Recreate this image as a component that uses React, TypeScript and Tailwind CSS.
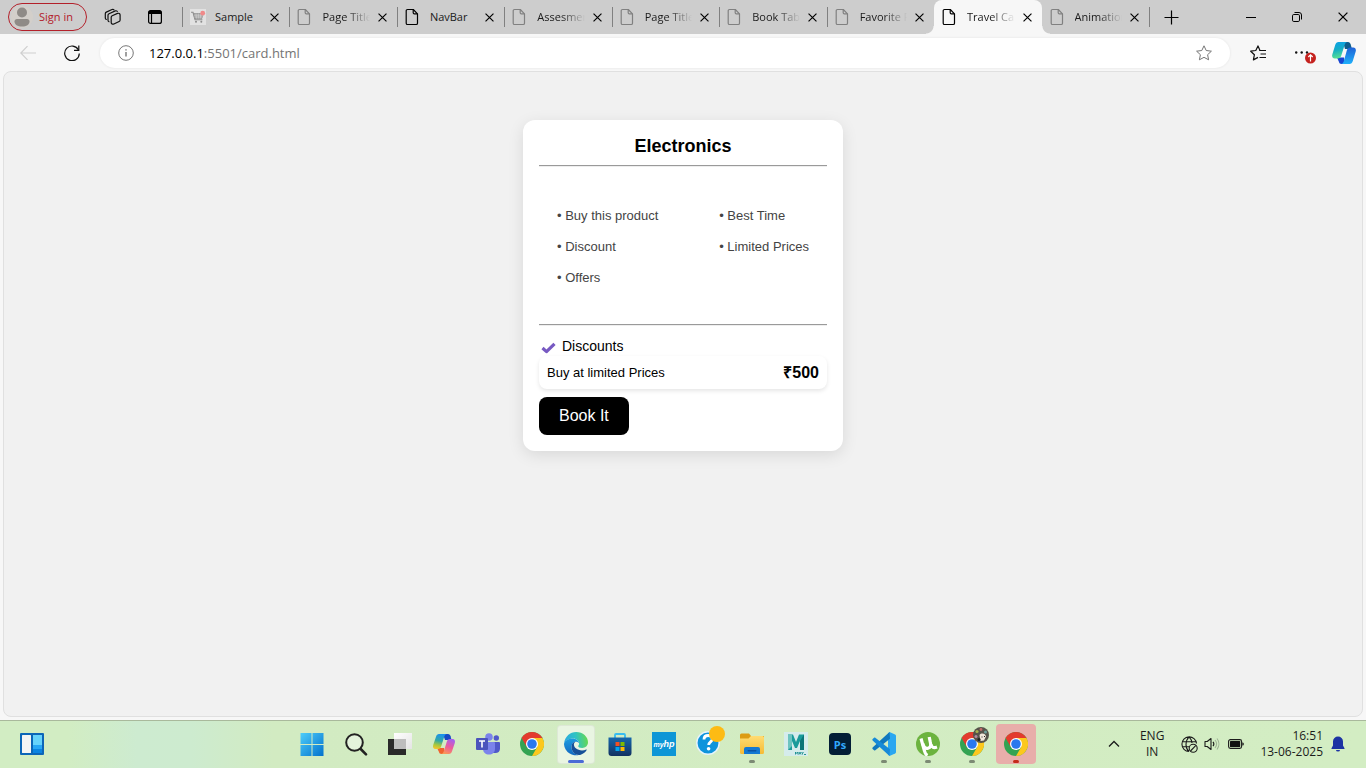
import React from "react";

type IconProps = { className?: string };

/* ---------- Browser chrome icons ---------- */

function PageIcon({ className = "" }: IconProps) {
  return (
    <svg viewBox="0 0 14 18" className={`h-[18px] w-3.5 shrink-0 ${className}`} fill="none" stroke="currentColor" strokeWidth="1.2" strokeLinejoin="round" aria-hidden="true">
      <path d="M2.5 1.5h5.8l4.2 4.3v9.4a1.3 1.3 0 0 1-1.3 1.3H2.5a1.3 1.3 0 0 1-1.3-1.3V2.8a1.3 1.3 0 0 1 1.3-1.3Z" />
      <path d="M8.2 1.6v3.2a1.1 1.1 0 0 0 1.1 1.1h3.1" />
    </svg>
  );
}

function CartIcon() {
  return (
    <svg viewBox="0 0 16 16" className="size-4 shrink-0" aria-hidden="true">
      <rect width="16" height="16" fill="#e2e2e2" />
      <path d="M1 3.3h2l2 7.5h7.4" fill="none" stroke="#8c8c8c" strokeWidth="1.1" />
      <path d="M3.5 4.5h9.8l-1.4 5H4.9Z" fill="#a5a5a5" stroke="#8c8c8c" strokeWidth=".7" />
      <path d="M6 4.5l.5 5M8.4 4.5v5M10.8 4.5l-.5 5M4 6.2h9M4.4 8h8.2" stroke="#d8d8d8" strokeWidth=".5" />
      <circle cx="6" cy="12.7" r="1" fill="#8c8c8c" />
      <circle cx="11.3" cy="12.7" r="1" fill="#8c8c8c" />
      <circle cx="12.7" cy="4.2" r="2.4" fill="#f08a8a" />
    </svg>
  );
}

function CrossIcon({ className = "size-[9px]" }: IconProps) {
  return (
    <svg viewBox="0 0 10 10" className={className} fill="none" stroke="currentColor" strokeWidth="1.3" aria-hidden="true">
      <path d="M.6.6l8.8 8.8M9.4.6.6 9.4" />
    </svg>
  );
}

function WorkspacesIcon() {
  return (
    <svg viewBox="0 0 18 18" className="size-[18px]" fill="none" stroke="#111" strokeWidth="1.2" strokeLinejoin="round" strokeLinecap="round" aria-hidden="true">
      <path d="M7.2 9.300c0-.8.400-1.300 1-1.600l5.300-2.300c1.300-.5 2.600.2 2.600 1.600v4.900c0 .8-.4 1.300-1 1.600l-5.200 2.500c-1.400.6-2.700-.1-2.700-1.500Z" />
      <path d="M5 13.700c-.6-.2-1-.7-1-1.400V7.300c0-.7.4-1.200 1-1.500l6.300-2.900c.8-.3 1.500-.1 2 .5" />
      <path d="M2.300 11.500c-.6-.2-1-.7-1-1.400V5.700c0-.7.4-1.300 1-1.600L8 1.500c.8-.3 1.600-.1 2 .4" />
    </svg>
  );
}

function TabActionsIcon() {
  return (
    <svg viewBox="0 0 16 16" className="size-4" aria-hidden="true">
      <rect x="1.600" y="1.600" width="12.800" height="12.800" rx="2" fill="none" stroke="#000" strokeWidth="1.2" />
      <path d="M1.500 3.500a2 2 0 0 1 2-2h9a2 2 0 0 1 2 2V5h-13Z" fill="#000" />
      <path d="M4.500 5v9.500" stroke="#000" strokeWidth="1.2" />
    </svg>
  );
}

function CopilotEdgeIcon() {
  return (
    <svg viewBox="0 0 24 24" className="size-6" aria-hidden="true">
      <defs>
        <linearGradient id="ceA" x1="0" y1="0" x2=".2" y2="1">
          <stop offset="0" stopColor="#0a9fe8" />
          <stop offset=".5" stopColor="#14acc6" />
          <stop offset="1" stopColor="#55df94" />
        </linearGradient>
        <linearGradient id="ceB" x1="0" y1="0" x2="0" y2="1">
          <stop offset="0" stopColor="#1f62d6" />
          <stop offset="1" stopColor="#1fb0fa" />
        </linearGradient>
      </defs>
      <path d="M11 1h5c1.500 0 2.200 1 2.600 2.300L20 8H13Z" fill="#0c5c8c" />
      <path d="M5 16.500h7l1 6.500H9.500c-1.500 0-2.200-1-2.600-2.300Z" fill="#1846d2" />
      <path d="M6.500 1h9c-1.500 0-2.300 1.200-2.800 2.700L9.300 14.500C8.700 16.300 7.700 17.500 5.700 17.500H2.800C.5 17.500-.3 15.500.3 13.500L3.200 4C3.800 2 5 1 6.500 1Z" fill="url(#ceA)" />
      <path d="M17.600 23H9c1.500 0 2.300-1.200 2.800-2.700l3-10.800c.5-1.800 1.500-3 3.500-3h2.900c2.300 0 3.100 2 2.500 4L20.800 20c-.6 2-1.700 3-3.200 3Z" fill="url(#ceB)" />
    </svg>
  );
}

/* ---------- Taskbar icons ---------- */

function Svg({ children, className = "size-6" }: { children: React.ReactNode; className?: string }) {
  return (
    <svg viewBox="0 0 24 24" className={className} fill="none" aria-hidden="true">
      {children}
    </svg>
  );
}

const WidgetsIcon = () => (
  <Svg>
    <rect y="1" width="24" height="22" rx="1" fill="#0c66b8" />
    <rect x="2" y="3" width="9" height="18" rx=".5" fill="#f5f5f5" />
    <rect x="13" y="3" width="9" height="10" fill="#66d3fb" />
    <rect x="13" y="13" width="9" height="4" fill="#27a7f5" />
    <rect x="13" y="17" width="9" height="4" fill="#0a84e2" />
  </Svg>
);

const WindowsIcon = () => (
  <Svg>
    <defs>
      <linearGradient id="win" x1="0" y1="0" x2="24" y2="24" gradientUnits="userSpaceOnUse">
        <stop stopColor="#4fd0fb" />
        <stop offset="1" stopColor="#0270cc" />
      </linearGradient>
    </defs>
    <path d="M.5 1h11v11H.5ZM12.500 1h11v11h-11ZM.5 13h11v11H.5ZM12.500 13h11v11h-11Z" fill="url(#win)" />
  </Svg>
);

const SearchIcon = () => (
  <Svg>
    <circle cx="10.500" cy="10.500" r="8.300" stroke="#222" strokeWidth="2" fill="#e4f3dc" />
    <path d="m16.700 17 5.300 5.300" stroke="#222" strokeWidth="2.600" strokeLinecap="round" />
  </Svg>
);

const TaskViewIcon = () => (
  <Svg>
    <defs>
      <linearGradient id="tvw" x1="0" y1="0" x2="1" y2="1">
        <stop stopColor="#fff" />
        <stop offset="1" stopColor="#e4e4e4" />
      </linearGradient>
    </defs>
    <rect y="7" width="18" height="16" fill="#2a2a2a" />
    <rect x="6" y="1" width="18" height="16" fill="url(#tvw)" />
    <rect x="6" y="7" width="12" height="10" fill="#bdbdbd" />
  </Svg>
);

const CopilotIcon = () => (
  <Svg>
    <defs>
      <linearGradient id="cpA" x1=".5" y1="0" x2=".3" y2="1">
        <stop stopColor="#1b91ee" />
        <stop offset=".45" stopColor="#32a8a4" />
        <stop offset=".75" stopColor="#a9c83a" />
        <stop offset="1" stopColor="#f4c52b" />
      </linearGradient>
      <linearGradient id="cpB" x1=".7" y1="0" x2=".3" y2="1">
        <stop stopColor="#a460f0" />
        <stop offset=".5" stopColor="#ec5a9c" />
        <stop offset="1" stopColor="#fb9a55" />
      </linearGradient>
    </defs>
    <path d="M11 2h5c1.500 0 2.200 1 2.600 2.300L19.500 8H13Z" fill="#1749c4" />
    <path d="M5 16h7l1 6H9.500c-1.500 0-2.200-1-2.600-2.300Z" fill="#f0632e" />
    <path d="M7 2h8c-1.500 0-2.300 1.200-2.800 2.700L9.300 14c-.5 1.800-1.500 3-3.500 3H3.500C1.200 17 .6 15 1.200 13L4 4.700C4.600 2.800 5.500 2 7 2Z" fill="url(#cpA)" />
    <path d="M17 22H9c1.500 0 2.300-1.200 2.800-2.700L14.700 10c.5-1.800 1.500-3 3.500-3h2.300c2.300 0 2.900 2 2.300 4L20 19.300c-.6 1.900-1.500 2.700-3 2.700Z" fill="url(#cpB)" />
  </Svg>
);

const TeamsIcon = () => (
  <Svg>
    <circle cx="20.300" cy="6" r="2.700" fill="#5059c9" />
    <circle cx="13" cy="5" r="3.800" fill="#7b83eb" />
    <path d="M17 10h6a1 1 0 0 1 1 1v5.500c0 3-2 4.500-4.500 4.500H17Z" fill="#5059c9" />
    <path d="M7 10h11a1 1 0 0 1 1 1v5.500c0 4-2.600 6-6 6s-6-2-6-6Z" fill="#7b83eb" />
    <rect y="6" width="12" height="12" rx="1" fill="#4b53bc" />
    <path d="M3 9h6M6 9v6.500" stroke="#fff" strokeWidth="1.600" />
  </Svg>
);

const ChromeIcon = () => (
  <Svg>
    <circle cx="12" cy="12" r="12" fill="#33a352" />
    <path d="M1.600 6A12 12 0 0 1 22.400 6H12L6.800 15Z" fill="#e33b2e" />
    <path d="M22.400 6A12 12 0 0 1 12 24l5.200-9L12 6Z" fill="#fcc81d" />
    <circle cx="12" cy="12" r="6" fill="#fff" />
    <circle cx="12" cy="12" r="4.800" fill="#2a78ee" />
  </Svg>
);

const EdgeIcon = () => (
  <Svg>
    <defs>
      <linearGradient id="edA" x1="0" y1=".5" x2="1" y2=".4">
        <stop stopColor="#2aa9e0" />
        <stop offset=".5" stopColor="#2fc3c4" />
        <stop offset="1" stopColor="#66d94e" />
      </linearGradient>
      <linearGradient id="edB" x1="0" y1="0" x2="0" y2="1">
        <stop stopColor="#1c9ce0" />
        <stop offset="1" stopColor="#1367c0" />
      </linearGradient>
    </defs>
    <path d="M.2 11C1 4.600 6 .1 12.200.1 19 .1 24 5 24 10.300c0 3.400-2.600 5.700-5.800 5.700-2.600 0-4-.9-4-1.700 0-.6.900-1 .9-2.700C15.100 9.200 12.700 6.500 9 6.500 4.500 6.500 1.200 8.700.2 11Z" fill="url(#edA)" />
    <path d="M0 12.500C0 9 3.700 6.500 8.500 6.500c3.500 0 6.300 2.300 6.600 4.600-1-1-2.200-1.300-3.400-1.300-2.200 0-4.200 2.300-4.200 5.400 0 4.500 3.700 7.800 8 7.600A12 12 0 0 1 0 12.500Z" fill="url(#edB)" />
    <path d="M11.500 9.800c-2.300 0-4 2.400-4 5.400 0 4.900 4.600 8.700 9.300 7.500 2.800-1 4.700-2.700 5.900-4.700.2-.4-.1-.7-.5-.5-1.300.6-2.600.9-4.200.9-4.700 0-8.100-2.800-8.100-5.800 0-1.200.6-2.200 1.600-2.800Z" fill="#174f98" />
  </Svg>
);

const StoreIcon = () => (
  <Svg>
    <defs>
      <linearGradient id="sto" x1="0" y1="0" x2="0" y2="1">
        <stop stopColor="#1667ac" />
        <stop offset="1" stopColor="#123160" />
      </linearGradient>
    </defs>
    <path d="M7 6.500V3a1 1 0 0 1 1-1h8a1 1 0 0 1 1 1v3.500" stroke="#37bdf0" strokeWidth="1.800" />
    <path d="M.5 5.500h23V21a3 3 0 0 1-3 3h-17a3 3 0 0 1-3-3Z" fill="url(#sto)" />
    <rect x="7.500" y="10" width="4" height="4" fill="#f25022" />
    <rect x="12.500" y="10" width="4" height="4" fill="#7fba00" />
    <rect x="7.500" y="15" width="4" height="4" fill="#00a4ef" />
    <rect x="12.500" y="15" width="4" height="4" fill="#ffb900" />
  </Svg>
);

const MyHpIcon = () => (
  <span className="flex size-6 items-center justify-center bg-[#0d96d6] font-['Liberation_Sans',sans-serif] text-[7px] leading-none font-bold text-white italic">
    my<span className="text-[9px]">hp</span>
  </span>
);

const HelpIcon = () => (
  <svg viewBox="0 0 30 30" className="size-[30px]" fill="none" aria-hidden="true">
    <circle cx="12" cy="17" r="11.200" fill="#0f94dc" stroke="#e6f3fb" strokeWidth="1.500" />
    <path d="M8 13.500c0-2.600 1.800-4 4.200-4s4.100 1.400 4.100 3.500c0 2.800-3.600 3-3.600 6" stroke="#fff" strokeWidth="2.800" />
    <circle cx="12.600" cy="22.700" r="1.800" fill="#fff" />
    <circle cx="21" cy="8" r="8" fill="#fdbb14" />
  </svg>
);

const FolderIcon = () => (
  <Svg>
    <defs>
      <linearGradient id="fol" x1="0" y1="0" x2="0" y2="1">
        <stop stopColor="#ffdc73" />
        <stop offset="1" stopColor="#f6bb35" />
      </linearGradient>
    </defs>
    <path d="M0 3a1.500 1.500 0 0 1 1.500-1.500H9L11 4H24v6H0Z" fill="#dc9c14" />
    <path d="M0 6.500h8.500L11 4h11.500A1.500 1.500 0 0 1 24 5.500v15a1.500 1.500 0 0 1-1.500 1.500h-21A1.500 1.500 0 0 1 0 20.500Z" fill="url(#fol)" />
    <path d="M4 22v-5a2 2 0 0 1 2-2h12a2 2 0 0 1 2 2v5Z" fill="#1479d2" />
    <rect x="7.500" y="18" width="9" height="1.500" rx=".7" fill="#0c54a4" />
  </Svg>
);

const MayaIcon = () => (
  <Svg>
    <rect width="24" height="24" fill="#d5ecec" />
    <path d="M4 2.500h5L12 10l3-7.500h5V18h-4V9l-3 7h-2L8 9v9H4Z" fill="#199b9b" />
    <path d="M4 2.500h4V14l-4 4Z" fill="#6cc4c0" />
    <path d="M16 9l4-6.500V18h-4Z" fill="#0c7478" />
    <path d="M11.500 22.500V20l1.300 1.500L14 20v2.500M15 22.500l1-2.500 1 2.500M17.500 20l1 1.300 1-1.300M18.500 21.200v1.300M20 22.500h2" stroke="#128a8c" strokeWidth=".9" />
  </Svg>
);

const PhotoshopIcon = () => (
  <span className="flex size-[22px] items-center justify-center rounded bg-[#031e36] font-['Open_Sans',sans-serif] text-[11px] leading-none font-bold text-[#31a8ff]">
    Ps
  </span>
);

const CodeIcon = () => (
  <Svg>
    <path d="m17.500 0 5.600 2.500c.6.300.9.700.9 1.400V20c0 .7-.3 1.200-.9 1.500L17.500 24 16 22.500v-21Z" fill="#2aa7f0" />
    <path d="M17.500 0 .6 15.600c-.4.400-.4 1 0 1.300l1.500 1.300c.4.300.8.300 1.200 0L18 6.800Z" fill="#1078be" />
    <path d="M17.500 24 .6 8.400c-.4-.4-.4-1 0-1.300l1.500-1.300c.4-.3.8-.3 1.200 0L18 17.200Z" fill="#168ad8" />
  </Svg>
);

const TorrentIcon = () => (
  <Svg>
    <circle cx="12" cy="12" r="12" fill="#6cb33f" />
    <path d="M5 6.500 8.500 19c.4 1.700 1.200 3.500 3 4.500" stroke="#fff" strokeWidth="3.200" />
    <path d="M6.700 11.500c1 4 2.800 5.300 5.300 4.700s3.200-2.700 2.300-6L13.200 5M15 12.500c.8 3 2.500 3.800 6 2.500" stroke="#fff" strokeWidth="3.200" />
  </Svg>
);

const ChromeProfileIcon = () => (
  <span className="relative">
    <ChromeIcon />
    <svg viewBox="0 0 16 16" className="absolute -top-[5px] -right-[5px] size-4" aria-hidden="true">
      <circle cx="8" cy="8" r="8" fill="#57534a" />
      <circle cx="4" cy="4.500" r="1.600" fill="#a6b04f" />
      <circle cx="8" cy="2.500" r="1.400" fill="#c46a6a" />
      <circle cx="12.500" cy="5" r="1.500" fill="#6fa09c" />
      <circle cx="3" cy="9.500" r="1.500" fill="#b08aa0" />
      <path d="M6.500 8c2-2.500 6-1.500 6.500 1.500L11 13.500l-3.500.5Z" fill="#f0e6da" />
      <circle cx="6" cy="12.500" r="1.500" fill="#222" />
      <path d="M8.500 10h1M11 9.500h1" stroke="#222" />
    </svg>
  </span>
);

/* ---------- Data ---------- */

type Tab = { title: string; icon?: "cart" | "dark"; active?: boolean; fade?: boolean };

const tabs: Tab[] = [
  { title: "Sample", icon: "cart" },
  { title: "Page Title", fade: true },
  { title: "NavBar", icon: "dark" },
  { title: "Assesment", fade: true },
  { title: "Page Title", fade: true },
  { title: "Book Table", fade: true },
  { title: "Favorite Page", fade: true },
  { title: "Travel Card", icon: "dark", active: true, fade: true },
  { title: "Animation", fade: true },
];

type TaskbarApp = { name: string; icon: React.ReactNode; state?: "running" | "current" | "alert" };

const apps: TaskbarApp[] = [
  { name: "Start", icon: <WindowsIcon /> },
  { name: "Search", icon: <SearchIcon /> },
  { name: "Task view", icon: <TaskViewIcon /> },
  { name: "Copilot", icon: <CopilotIcon /> },
  { name: "Teams", icon: <TeamsIcon /> },
  { name: "Chrome", icon: <ChromeIcon /> },
  { name: "Edge", icon: <EdgeIcon />, state: "current" },
  { name: "Store", icon: <StoreIcon /> },
  { name: "myHP", icon: <MyHpIcon /> },
  { name: "Help", icon: <HelpIcon /> },
  { name: "File Explorer", icon: <FolderIcon />, state: "running" },
  { name: "Maya", icon: <MayaIcon /> },
  { name: "Photoshop", icon: <PhotoshopIcon /> },
  { name: "Code", icon: <CodeIcon />, state: "running" },
  { name: "Torrent", icon: <TorrentIcon />, state: "running" },
  { name: "Chrome profile", icon: <ChromeProfileIcon />, state: "running" },
  { name: "Chrome window", icon: <ChromeIcon />, state: "alert" },
];

const features = ["Buy this product", "Best Time", "Discount", "Limited Prices", "Offers"];

/* ---------- Sections ---------- */

function TabItem({ tab, divider }: { tab: Tab; divider: boolean }) {
  return (
    <div className={`relative flex h-full min-w-0 flex-1 items-center pr-2.5 pl-2 ${tab.active ? "rounded-t-lg bg-[#f7f7f7]" : ""}`}>
      {divider && <span className="absolute top-[7px] left-0 h-5 w-px bg-[#808080]" />}
      {tab.active && (
        <>
          <span className="absolute bottom-0 -left-2 size-2 bg-[radial-gradient(circle_at_0_0,#cdcdcd_7px,#f7f7f7_8px)]" />
          <span className="absolute -right-2 bottom-0 size-2 bg-[radial-gradient(circle_at_100%_0,#cdcdcd_7px,#f7f7f7_8px)]" />
        </>
      )}
      <span className="flex w-[25px] shrink-0">
        {tab.icon === "cart" ? <CartIcon /> : <PageIcon className={tab.icon === "dark" ? "text-black" : "text-[#808080]"} />}
      </span>
      <span
        className={`min-w-0 flex-1 overflow-hidden text-[11px] leading-4 whitespace-nowrap text-[#1a1a1a] ${
          tab.fade ? "[mask-image:linear-gradient(to_right,#000_50%,transparent)]" : ""
        }`}
      >
        {tab.title}
      </span>
      <button className="ml-2 shrink-0" aria-label={`Close ${tab.title}`}>
        <CrossIcon />
      </button>
    </div>
  );
}

function TabStrip() {
  return (
    <div className="flex h-[34px] items-center bg-[#cdcdcd]">
      <button className="ml-2 flex h-7 w-[79px] shrink-0 items-center gap-1.5 rounded-full border border-[#b3202a] pl-0.5 text-[11px] text-[#b3202a]">
        <svg viewBox="0 0 22 22" className="size-[22px]" aria-hidden="true">
          <circle cx="11" cy="11" r="11" fill="#d3cfca" />
          <circle cx="11" cy="6.500" r="5" fill="#8f8b87" />
          <path d="M3.500 15.500c0-1.500 1-2.500 2.500-2.500h10c1.500 0 2.500 1 2.500 2.500 0 3-3 5-7.500 5s-7.500-2-7.500-5Z" fill="#8f8b87" />
        </svg>
        Sign in
      </button>
      <button className="ml-[17px] shrink-0" aria-label="Workspaces"><WorkspacesIcon /></button>
      <button className="ml-[25px] shrink-0" aria-label="Tab actions"><TabActionsIcon /></button>
      <div className="ml-[19px] flex h-full max-w-[967px] min-w-0 flex-1">
        {tabs.map((tab, i) => (
          <TabItem key={i} tab={tab} divider={!tab.active && !tabs[i - 1]?.active} />
        ))}
      </div>
      <div className="flex h-full shrink-0 items-center">
        <span className="h-5 w-px bg-[#808080]" />
        <button className="ml-3.5" aria-label="New tab">
          <svg viewBox="0 0 15 15" className="size-[15px]" stroke="#000" strokeWidth="1.2" aria-hidden="true"><path d="M7.500.5v14M.5 7.500h14" /></svg>
        </button>
      </div>
      <div className="ml-auto flex shrink-0 items-center gap-9 pr-[18px]">
        <button aria-label="Minimize">
          <svg viewBox="0 0 10 10" className="size-2.5" stroke="#000" aria-hidden="true"><path d="M0 5.500h10" /></svg>
        </button>
        <button aria-label="Restore">
          <svg viewBox="0 0 10 10" className="size-2.5" fill="none" stroke="#000" aria-hidden="true">
            <rect x=".5" y="2.500" width="7" height="7" rx="1.300" />
            <path d="M2.500.5H7A2.500 2.500 0 0 1 9.500 3v4.500" />
          </svg>
        </button>
        <button aria-label="Close window"><CrossIcon className="size-2.5" /></button>
      </div>
    </div>
  );
}

function Toolbar() {
  return (
    <div className="flex h-[37px] items-center bg-[#f7f7f7] pl-5">
      <button className="shrink-0" aria-label="Back">
        <svg viewBox="0 0 16 16" className="size-4" fill="none" stroke="#cfcfcf" strokeWidth="1.2" aria-hidden="true"><path d="M16 8H.8M7.500 1.200.8 8l6.700 6.800" /></svg>
      </button>
      <button className="ml-7 shrink-0" aria-label="Refresh">
        <svg viewBox="0 0 16 16" className="size-4" fill="none" stroke="#111" strokeWidth="1.2" aria-hidden="true">
          <path d="M14.500 5A7.300 7.300 0 1 0 15.300 8.500" />
          <path d="M14.800.5v4.800H10" />
        </svg>
      </button>
      <div className="ml-5 flex h-[30px] min-w-0 flex-1 items-center rounded-full bg-white px-[18px] shadow-[0_0_2px_1px_rgba(0,0,0,0.04)]">
        <svg viewBox="0 0 16 16" className="size-4 shrink-0" fill="none" stroke="#777" aria-hidden="true">
          <circle cx="8" cy="8" r="7.300" />
          <path d="M8 7v4.500M8 4.200v1.300" strokeWidth="1.400" />
        </svg>
        <p className="ml-[15px] flex-1 text-[13px] leading-5 text-[#747474]">
          <span className="text-black">127.0.0.1</span>:5501/card.html
        </p>
        <button aria-label="Add to favorites">
          <svg viewBox="0 0 16 16" className="size-4" fill="none" stroke="#767676" strokeLinejoin="round" aria-hidden="true">
            <path d="m8 .8 2.200 4.700 5.200.7-3.800 3.500 1 5.100L8 12.300l-4.600 2.500 1-5.100L.6 6.200l5.200-.7Z" />
          </svg>
        </button>
      </div>
      <div className="flex shrink-0 items-center pr-2.5 pl-5">
        <button aria-label="Favorites">
          <svg viewBox="0 0 17 16" className="h-4 w-[17px]" fill="none" stroke="#111" strokeWidth="1.2" strokeLinejoin="round" aria-hidden="true">
            <path d="M10 5.500 8 .9 5.800 5.500.7 6.200l3.700 3.500-1 5.200L8 12.400" />
            <path d="M9.300 5.500H16M10.500 9H16M9.500 12.500H16" />
          </svg>
        </button>
        <button className="ml-[27px]" aria-label="Settings and more, update available">
          <svg viewBox="0 0 22 22" className="size-[22px]" fill="none" aria-hidden="true">
            <g fill="#111">
              <circle cx="2.200" cy="10.500" r="1.200" />
              <circle cx="7.700" cy="10.500" r="1.200" />
              <circle cx="13" cy="10.500" r="1.200" />
            </g>
            <circle cx="16.500" cy="16" r="5.500" fill="#c5221f" />
            <path d="M16.500 19.500v-6.500M14.300 15l2.200-2.200 2.200 2.200" stroke="#fff" strokeWidth="1.2" />
          </svg>
        </button>
        <button className="ml-4" aria-label="Copilot"><CopilotEdgeIcon /></button>
      </div>
    </div>
  );
}

function ProductCard() {
  return (
    <section className="mx-auto mt-12 w-80 rounded-xl bg-white p-4 font-['Liberation_Sans',Arial,sans-serif] text-black shadow-[0_4px_16px_rgba(0,0,0,0.1)]">
      <h1 className="text-center text-lg leading-5 font-bold">Electronics</h1>
      <hr className="mt-[9px] border-t border-b border-t-[#9a9a9a] border-b-[#eeeeee]" />
      <ul className="mt-[41px] grid grid-cols-[auto_auto] justify-between gap-y-4 px-[18px] text-[13px] leading-[15px] text-[#444]">
        {features.map((feature) => (
          <li key={feature}>• {feature}</li>
        ))}
      </ul>
      <hr className="mt-[39px] border-t border-b border-t-[#9a9a9a] border-b-[#eeeeee]" />
      <p className="mt-2.5 flex items-center gap-1.5 pl-0.5 text-sm leading-5">
        <svg viewBox="0 0 15 12" className="mt-1 h-3 w-[15px]" fill="none" stroke="#7759c2" strokeWidth="3.200" aria-hidden="true">
          <path d="m1.500 6 4 3.600 8-7.800" strokeLinejoin="round" />
        </svg>
        Discounts
      </p>
      <div className="flex h-[33px] items-center justify-between rounded-lg px-2 shadow-[0_2px_4px_rgba(0,0,0,0.1)]">
        <span className="text-[13px] leading-4">Buy at limited Prices</span>
        <span className="text-base leading-4 font-bold">₹500</span>
      </div>
      <button className="mt-2 rounded-lg bg-black px-5 py-[9px] text-base leading-5 text-white">Book It</button>
    </section>
  );
}

function Taskbar() {
  return (
    <footer className="grid h-12 grid-cols-[290fr_748px_328fr] items-start border-t border-[#a9b99c] bg-[linear-gradient(to_right,#d2edc3_5%,#cdebd0_10%,#cdebcf_14%,#d2ebc2_20%,#d3edc3)] text-[12px] text-[#1b1b1b]">
      <button className="ml-5 flex h-[46px] items-center justify-self-start" aria-label="Widgets"><WidgetsIcon /></button>
      <nav className="flex" aria-label="Taskbar">
        {apps.map((app) => (
          <button key={app.name} aria-label={app.name} className="relative flex h-[46px] w-11 items-center justify-center">
            {app.state === "current" && <span className="absolute inset-x-[3px] top-1 bottom-[3px] rounded border border-black/5 bg-[#e9f5e2]" />}
            {app.state === "alert" && <span className="absolute inset-x-0.5 top-[3px] bottom-[3px] rounded bg-[#e8aeaa]" />}
            <span className={`relative flex ${app.name === "Help" ? "mb-1.5 ml-1.5" : ""}`}>{app.icon}</span>
            {app.state && (
              <span
                className={`absolute bottom-1 h-[3px] rounded-full ${
                  app.state === "current" ? "w-4 bg-[#4a6bd6]" : app.state === "alert" ? "w-1.5 bg-[#c42b1c]" : "w-1.5 bg-[#7c8a74]"
                }`}
              />
            )}
          </button>
        ))}
      </nav>
      <div className="flex h-[46px] items-center justify-end pr-[21px]">
        <button aria-label="Show hidden icons">
          <svg viewBox="0 0 12 8" className="h-2 w-3" fill="none" stroke="#1b1b1b" strokeWidth="1.300" aria-hidden="true"><path d="m1 6.500 5-5 5 5" /></svg>
        </button>
        <p className="ml-5 text-center leading-4">ENG<br />IN</p>
        <svg viewBox="0 0 17 17" className="ml-[17px] size-[17px]" fill="none" stroke="#1b1b1b" strokeWidth="1.100" aria-hidden="true">
          <path d="M8 15.500A7.300 7.300 0 1 1 15.500 7.500M1.300 5.700h13.400M1.300 10.800H8M8 15.500C4 12 4 5 8 .8c2 2 3 4 3 6.200" />
          <circle cx="12.200" cy="12.200" r="4" />
          <path d="m9.500 15 5.400-5.600" />
        </svg>
        <svg viewBox="0 0 17 16" className="ml-1.5 h-4 w-[17px]" fill="none" stroke="#1b1b1b" strokeWidth="1.100" strokeLinejoin="round" aria-hidden="true">
          <path d="M1 5.500h2.200L7 2.500v11L3.200 10.500H1Z" />
          <path d="M9 5.800a3.500 3.500 0 0 1 0 4.400" />
          <path d="M11 4a6.300 6.300 0 0 1 0 8M13 2.500a9 9 0 0 1 0 11" stroke="#9fb295" />
        </svg>
        <svg viewBox="0 0 16 12" className="ml-[7px] h-3 w-4" aria-hidden="true">
          <rect x=".6" y="1.600" width="13" height="8.800" rx="1.800" fill="none" stroke="#1b1b1b" strokeWidth="1.100" />
          <rect x="2" y="3" width="10.200" height="6" rx=".6" fill="#111" />
          <path d="M14.300 4.500c1 0 1.500.5 1.500 1.500s-.5 1.500-1.500 1.500Z" fill="#1b1b1b" />
        </svg>
        <p className="ml-4 text-right leading-4">16:51<br />13-06-2025</p>
        <svg viewBox="0 0 14 16" className="ml-2 h-4 w-3.5" fill="#1c33a3" aria-hidden="true">
          <path d="M7 .5a5 5 0 0 1 5 5v4l1.500 2.700c.2.400 0 .8-.5.800H1c-.5 0-.7-.4-.5-.8L2 9.500v-4a5 5 0 0 1 5-5ZM5 14h4a2 1.600 0 0 1-4 0Z" />
        </svg>
      </div>
    </footer>
  );
}

export default function App() {
  return (
    <div className="flex min-h-screen flex-col bg-[#f7f7f7] font-['Open_Sans','Segoe_UI',sans-serif]">
      <header>
        <TabStrip />
        <Toolbar />
      </header>
      <main className="mx-[3px] mb-[3px] flex-1 rounded-lg border border-[#e0e0e0] bg-[#f1f1f1]">
        <ProductCard />
      </main>
      <Taskbar />
    </div>
  );
}
